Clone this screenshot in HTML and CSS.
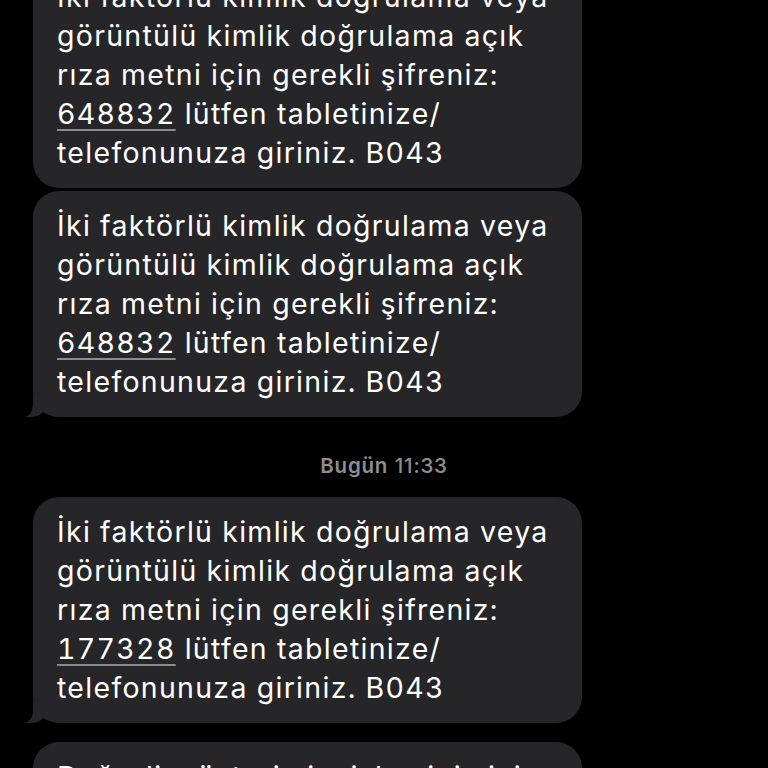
FILE: index.html
```html
<!DOCTYPE html>
<html lang="tr">
<head>
<meta charset="utf-8">
<title>Mesajlar</title>
<link rel="stylesheet" href="styles.css">
</head>
<body>
<main class="thread">
  <div class="bubble">İki faktörlü kimlik doğrulama veya<br>görüntülü kimlik doğrulama açık<br>rıza metni için gerekli şifreniz:<br><span class="code">648832</span> lütfen tabletinize/<br>telefonunuza giriniz. B043</div>
  <div class="bubble tail">İki faktörlü kimlik doğrulama veya<br>görüntülü kimlik doğrulama açık<br>rıza metni için gerekli şifreniz:<br><span class="code">648832</span> lütfen tabletinize/<br>telefonunuza giriniz. B043</div>
  <div class="stamp"><span class="day">Bugün</span> <span class="time">11:33</span></div>
  <div class="bubble tail">İki faktörlü kimlik doğrulama veya<br>görüntülü kimlik doğrulama açık<br>rıza metni için gerekli şifreniz:<br><span class="code">177328</span> lütfen tabletinize/<br>telefonunuza giriniz. B043</div>
  <div class="bubble gap">Değerli müşterimiz, işleminiz için<br>doğrulama kodunuz hazırdır.</div>
</main>
</body>
</html>
```
FILE: styles.css
```css
html, body {
  margin: 0;
  padding: 0;
  background: #000;
  height: 100%;
  overflow: hidden;
}
body {
  font-family: Inter, "Noto Sans", "Liberation Sans", sans-serif;
  color: #fff;
}
.thread {
  display: flex;
  flex-direction: column;
  align-items: flex-start;
  gap: 3px;
  margin-top: -38px;
  padding-left: 33px;
}
.bubble {
  position: relative;
  box-sizing: border-box;
  width: 549px;
  padding: 15px 20px 16px 24px;
  background: #262628;
  border-radius: 26px;
  font-size: 28.5px;
  line-height: 39px;
  letter-spacing: 1.3px;
  white-space: nowrap;
  font-variant-numeric: tabular-nums;
}
.bubble.tail::before {
  content: "";
  position: absolute;
  left: -10px;
  bottom: 0;
  width: 24px;
  height: 22px;
  background: #262628;
  border-bottom-right-radius: 16px 14px;
}
.bubble.tail::after {
  content: "";
  position: absolute;
  left: -14px;
  bottom: 0;
  width: 14px;
  height: 24px;
  background: #000;
  border-bottom-right-radius: 10px 12px;
}
.code {
  text-decoration: underline;
  text-decoration-color: #8b8b90;
  text-decoration-thickness: 2px;
  text-underline-offset: 5px;
}
.stamp {
  align-self: stretch;
  text-align: center;
  margin: 34px 0 16px -33px;
  font-size: 20.5px;
  line-height: 24px;
  letter-spacing: 0.8px;
  color: #8d8d92;
}
.day { font-weight: 600; }
.time { font-weight: 500; }
.bubble.gap { margin-top: 16px; }
```
